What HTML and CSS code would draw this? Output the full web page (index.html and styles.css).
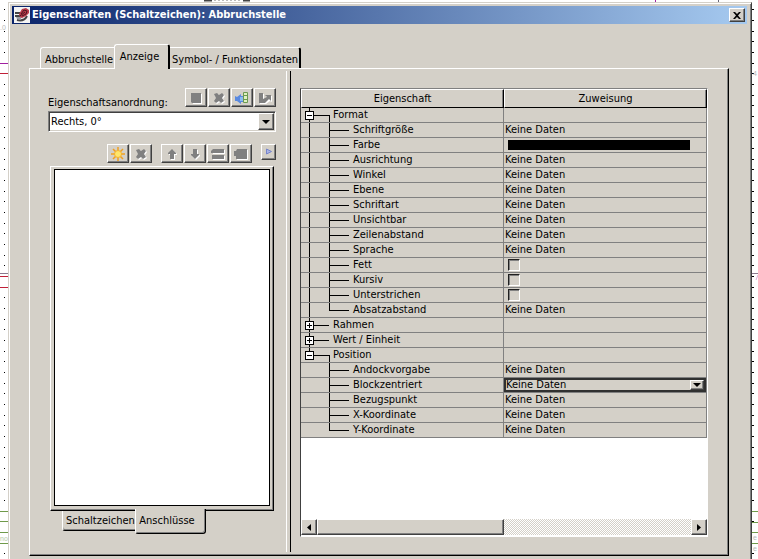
FILE: index.html
```html
<!DOCTYPE html>
<html lang="de">
<head>
<meta charset="utf-8">
<title>Eigenschaften (Schaltzeichen): Abbruchstelle</title>
<link rel="stylesheet" href="styles.css">
</head>
<body>
<svg class="drawing" width="758" height="559" viewBox="0 0 758 559" aria-hidden="true">
  <defs>
    <pattern id="dots" width="758" height="32" patternUnits="userSpaceOnUse">
      <path d="M4 9h1M4 20h1M4 31h1M752 9h2M752 20h2M752 31h2" stroke="#000" transform="translate(0 .5)"/>
    </pattern>
  </defs>
  <rect width="758" height="559" fill="url(#dots)"/>
  <path d="M0 63.5h8" stroke="#a020a0"/>
  <path d="M0 73.5h8M0 276.5h8M0 287.5h8" stroke="#c02038"/>
  <path d="M0 273.5h8M752 273.5h6" stroke="#8a7a8e"/>
  <path d="M0 511.5h8M0 521.5h8M0 532.5h8M0 543.5h8M752 511.5h6M752 522.5h6M752 532.5h6M752 543.5h6" stroke="#6f9a4a"/>
  <path d="M204 .5h8M243 .5h7" stroke="#444" stroke-width="2"/>
  <path d="M214 .5h28" stroke="#bbb" stroke-dasharray="2 2"/>
  <path d="M655.5 0v2" stroke="#a020a0"/><path d="M718.5 0v2" stroke="#667"/>
  <g font-family="Liberation Sans" font-size="7" fill="#b8b8b8"><text x="0" y="30">.0</text><text x="0" y="541" fill="#b4c8a4">no</text><text x="753" y="540">e</text><text x="753" y="551">e</text><text x="753" y="76">4</text></g>
  <path d="M756 280l2-5" stroke="#e0b0d8"/>
</svg>

<main class="dialog">
  <header class="titlebar">
    <svg class="logo" width="16" height="16" viewBox="0 0 16 16" aria-hidden="true">
      <path fill="#f4f4f4" d="M0 0h16v16H0z"/>
      <path fill="none" stroke="#444" stroke-width="2" d="M1 6h5M1 9h6M3 13c4 1 8 0 10-4"/>
      <path fill="#9a9aa2" d="M2 10h6l-2 3-3-1z"/>
      <path fill="#b83a48" d="M5 7l3-5 4-1 3 2v3l-3 3-4 2-2-1z"/>
      <path fill="none" stroke="#4a1820" d="M7 7l3-4 3 1-1 3-4 2M6 9l5-4"/>
    </svg>
    <h1>Eigenschaften (Schaltzeichen): Abbruchstelle</h1>
    <button class="btn close" type="button" aria-label="Schließen"><svg width="8" height="7" viewBox="0 0 8 7"><path d="M0 0h2l2 2 2-2h2L5 3.500 8 7H6L4 5 2 7H0l3-3.500z"/></svg></button>
  </header>

  <nav class="tabs" role="tablist">
    <button class="tab first" type="button" role="tab">Abbruchstelle</button>
    <button class="tab active" type="button" role="tab" aria-selected="true">Anzeige</button>
    <button class="tab last" type="button" role="tab">Symbol- / Funktionsdaten</button>
  </nav>

  <div class="page">
    <section class="left">
      <div class="row arrange">
        <label for="order">Eigenschaftsanordnung:</label>
        <div class="tools">
          <button class="btn tool" type="button" aria-label="Speichern"><svg viewBox="0 0 16 14"><path class="hi" d="M4 3h10v10H5z"/><path class="off" d="M3 2h10v10H4l-1-1z"/></svg></button>
          <button class="btn tool" type="button" aria-label="Löschen"><svg viewBox="0 0 16 14"><path class="hi" d="M4 4l3-1 2 2 3-2 2 2-2 3 2 3-3 2-2-2-3 2-2-2 2-3z"/><path class="off" d="M3 3l3-1 2 2 3-2 2 2-2 3 2 3-3 2-2-2-3 2-2-2 2-3z"/></svg></button>
          <button class="btn tool" type="button" aria-label="Übernehmen"><svg viewBox="0 0 16 14"><path fill="#5a8ae0" d="M1 5l2 1 4-3v2h2v6H7v2l-4-3H1z"/><path fill="#8dbcf0" d="M6 6h3v4H6z"/><path fill="#dff0c0" stroke="#6c9a50" d="M9.500 1.500h4v10h-4zM10 4.500h3M10 8.500h3"/></svg></button>
          <button class="btn tool" type="button" aria-label="Zuordnen"><svg viewBox="0 0 16 14"><path class="hi" d="M3 3h4v6l4-2-2-2h6v6l-2-1-4 3H3z"/><path class="off" d="M2 2h4v6l4-2-2-2h6v6l-2-2-4 4H2z"/></svg></button>
        </div>
      </div>
      <div class="combo">
        <select id="order"><option>Rechts, 0°</option></select>
        <span class="btn arrow" aria-hidden="true"></span>
      </div>
      <div class="row edit">
        <div class="tools">
          <button class="btn tool" type="button" aria-label="Neu"><svg viewBox="0 0 16 14"><path stroke="#f0a020" stroke-width="1.500" d="M8 0v14M1 7h14M3 2l10 10M13 2L3 12"/><circle cx="8" cy="7" r="3.500" fill="#ffe66a" stroke="#f4b030"/></svg></button>
          <button class="btn tool" type="button" aria-label="Entfernen"><svg viewBox="0 0 16 14"><path class="hi" d="M4 4l3-1 2 2 3-2 2 2-2 3 2 3-3 2-2-2-3 2-2-2 2-3z"/><path class="off" d="M3 3l3-1 2 2 3-2 2 2-2 3 2 3-3 2-2-2-3 2-2-2 2-3z"/></svg></button>
        </div>
        <div class="tools">
          <button class="btn tool" type="button" aria-label="Nach oben"><svg viewBox="0 0 16 14"><path class="hi" d="M9 3l4 4v1h-2v5H7V8H5V7z"/><path class="off" d="M8 2l4 4v1h-2v5H6V7H4V6z"/></svg></button>
          <button class="btn tool" type="button" aria-label="Nach unten"><svg viewBox="0 0 16 14"><path class="hi" d="M9 13l4-4V8h-2V3H7v5H5v1z"/><path class="off" d="M8 12l4-4V7h-2V2H6v5H4v1z"/></svg></button>
          <button class="btn tool" type="button" aria-label="Andocken"><svg viewBox="0 0 16 14"><path class="hi" d="M3 3h12v4H3zM3 9h12v4H3z"/><path class="off" d="M3 2h11v4H1V4zM2 8h12v4H2z"/></svg></button>
          <button class="btn tool" type="button" aria-label="Abdocken"><svg viewBox="0 0 16 14"><path class="hi" d="M4 3h11v10H4z"/><path class="off" d="M4 2h10v10H3V9H1V4h2z"/></svg></button>
        </div>
        <button class="btn more" type="button" aria-label="Mehr"><svg width="8" height="8" viewBox="0 0 8 8"><path fill="#a9b4e6" stroke="#7684cc" d="M1.500 1v5l5-2.500z"/></svg></button>
      </div>
      <div class="listframe"><div class="list"></div></div>
      <div class="subtabs" role="tablist">
        <button class="subtab" type="button" role="tab">Schaltzeichen</button>
        <button class="subtab active" type="button" role="tab" aria-selected="true">Anschlüsse</button>
      </div>
    </section>

    <section class="right">
      <div class="grid">
        <table>
          <thead><tr><th scope="col">Eigenschaft</th><th scope="col">Zuweisung</th></tr></thead>
          <tbody>
            <tr><th scope="row" class="group open"><button class="toggle" type="button" aria-label="Format zuklappen"></button>Format</th><td></td></tr>
            <tr><th scope="row" class="leaf trunk">Schriftgröße</th><td>Keine Daten</td></tr>
            <tr><th scope="row" class="leaf trunk">Farbe</th><td><div class="swatch"></div></td></tr>
            <tr><th scope="row" class="leaf trunk">Ausrichtung</th><td>Keine Daten</td></tr>
            <tr><th scope="row" class="leaf trunk">Winkel</th><td>Keine Daten</td></tr>
            <tr><th scope="row" class="leaf trunk">Ebene</th><td>Keine Daten</td></tr>
            <tr><th scope="row" class="leaf trunk">Schriftart</th><td>Keine Daten</td></tr>
            <tr><th scope="row" class="leaf trunk">Unsichtbar</th><td>Keine Daten</td></tr>
            <tr><th scope="row" class="leaf trunk">Zeilenabstand</th><td>Keine Daten</td></tr>
            <tr><th scope="row" class="leaf trunk">Sprache</th><td>Keine Daten</td></tr>
            <tr><th scope="row" class="leaf trunk"><label for="fett">Fett</label></th><td><input type="checkbox" id="fett"></td></tr>
            <tr><th scope="row" class="leaf trunk"><label for="kursiv">Kursiv</label></th><td><input type="checkbox" id="kursiv"></td></tr>
            <tr><th scope="row" class="leaf trunk"><label for="unter">Unterstrichen</label></th><td><input type="checkbox" id="unter"></td></tr>
            <tr><th scope="row" class="leaf trunk end">Absatzabstand</th><td>Keine Daten</td></tr>
            <tr><th scope="row" class="group"><button class="toggle plus" type="button" aria-label="Rahmen aufklappen"></button>Rahmen</th><td></td></tr>
            <tr><th scope="row" class="group"><button class="toggle plus" type="button" aria-label="Wert / Einheit aufklappen"></button>Wert / Einheit</th><td></td></tr>
            <tr><th scope="row" class="group open final"><button class="toggle" type="button" aria-label="Position zuklappen"></button>Position</th><td></td></tr>
            <tr><th scope="row" class="leaf">Andockvorgabe</th><td>Keine Daten</td></tr>
            <tr><th scope="row" class="leaf"><label for="block">Blockzentriert</label></th><td class="editing"><div class="cellcombo"><select id="block"><option>Keine Daten</option></select><span class="btn arrow" aria-hidden="true"></span></div></td></tr>
            <tr><th scope="row" class="leaf">Bezugspunkt</th><td>Keine Daten</td></tr>
            <tr><th scope="row" class="leaf">X-Koordinate</th><td>Keine Daten</td></tr>
            <tr><th scope="row" class="leaf end">Y-Koordinate</th><td>Keine Daten</td></tr>
          </tbody>
        </table>
        <div class="scrollbar">
          <button class="btn step" type="button" aria-label="Nach links"><svg width="4" height="7" viewBox="0 0 4 7"><path d="M4 0v7L0 3.500z"/></svg></button>
          <div class="btn thumb"></div>
          <div class="track"></div>
          <button class="btn step" type="button" aria-label="Nach rechts"><svg width="4" height="7" viewBox="0 0 4 7"><path d="M0 0v7l4-3.500z"/></svg></button>
        </div>
      </div>
    </section>
  </div>
</main>
</body>
</html>
```
FILE: styles.css
```css
* { box-sizing: border-box; }

:root {
  --face: #d4d0c8;
  --shadow: #808080;
  --dark: #202020;
}

body {
  margin: 0;
  padding: 2px 6px 0 8px;
  background: #fff;
  color: #000;
  font: 11px/14px Tahoma, "DejaVu Sans Condensed", "DejaVu Sans", sans-serif;
  overflow: hidden;
}

button, select, input { font: inherit; color: inherit; margin: 0; }
svg { display: block; }

.drawing { position: absolute; left: 0; top: 0; z-index: -1; }

.dialog {
  display: flex;
  flex-direction: column;
  height: calc(100vh - 2px);
  min-height: 500px;
  padding: 3px 4px 3px 3px;
  background: var(--face);
  border: 1px solid var(--face);
  border-right-color: #404040;
  border-bottom: 0;
  box-shadow: inset 1px 1px #fff, inset -1px 0 var(--shadow);
}

.titlebar {
  display: flex;
  align-items: center;
  height: 18px;
  padding: 0 2px;
  gap: 2px;
  background: linear-gradient(90deg, #0a246a, #a6caf0);
}
.titlebar h1 {
  flex: 1;
  margin: 0;
  color: #fff;
  font-size: 11px;
  font-weight: bold;
  white-space: nowrap;
}

.btn {
  display: flex;
  align-items: center;
  justify-content: center;
  padding: 0;
  background: var(--face);
  border: 1px solid;
  border-color: #fff #404040 #404040 #fff;
  box-shadow: inset -1px -1px var(--shadow);
}
.close { width: 16px; height: 14px; }

.tabs {
  display: flex;
  align-items: flex-end;
  margin-top: 20px;
  padding-left: 28px;
}
.tab {
  height: 21px;
  padding: 3px 3px 0;
  background: var(--face);
  border: 1px solid #fff;
  border-width: 1px 0 0 1px;
  border-radius: 3px 0 0 0;
  white-space: nowrap;
}
.tab.first { width: 74px; padding: 3px 0 0 4px; text-align: left; }
.tab.active {
  position: relative;
  width: 56px;
  height: 25px;
  margin-bottom: -1px;
  padding: 0 8px 0 4px;
  border-right: 2px solid #000;
  border-radius: 3px 3px 0 0;
}
.tab.last { width: 131px; padding: 3px 2px 0; border-left: 0; border-right: 2px solid #000; border-radius: 0 3px 0 0; }

.page {
  flex: 1;
  display: flex;
  min-height: 0;
  margin: 0 18px 0 17px;
  padding: 2px 0 3px;
  border: 1px solid;
  border-color: #fff #000 #000 #fff;
  box-shadow: inset -1px -1px var(--shadow);
}

.left {
  display: flex;
  flex-direction: column;
  width: 257px;
  padding: 17px 10px 19px 18px;
  border-right: 1px solid #fff;
}
.row { display: flex; align-items: center; }
.arrange { justify-content: space-between; height: 19px; }
.arrange label { padding-top: 10px; white-space: nowrap; }
.tools { display: flex; gap: 1px; }
.tool { width: 22px; height: 19px; }
.tool svg { width: 16px; height: 14px; }
.off { fill: #808080; }
.hi { fill: #fff; }

.combo {
  display: flex;
  height: 21px;
  margin-top: 4px;
  padding: 1px;
  background: #fff;
  border: 1px solid;
  border-color: var(--shadow) #fff #fff var(--shadow);
  box-shadow: inset 1px 1px #404040, inset -1px -1px var(--face);
}
select {
  flex: 1;
  min-width: 0;
  padding: 0 1px;
  appearance: none;
  background: transparent;
  border: 0;
  border-radius: 0;
  outline: 0;
}
.arrow { width: 16px; pointer-events: none; }
.arrow::before { content: ""; border: 4px solid transparent; border-top-color: #000; border-bottom: 0; }

.edit { gap: 9px; margin-top: 12px; justify-content: flex-end; align-items: flex-start; }
.more { width: 15px; height: 16px; }

.listframe {
  flex: 1;
  display: flex;
  margin: 3px 2px 0;
  padding: 2px 3px 4px;
  border: 1px solid;
  border-color: #fff #000 #000 #fff;
  box-shadow: inset -1px -1px var(--shadow);
}
.list { flex: 1; background: #fff; border: 1px solid #000; }

.subtabs { display: flex; align-items: flex-start; height: 22px; padding-left: 14px; }
.subtab {
  width: 73px;
  height: 20px;
  padding: 0 3px;
  background: var(--face);
  border: 1px solid;
  border-color: transparent #000 #000 #fff;
  border-width: 0 0 1px 1px;
  border-radius: 0 0 0 3px;
  box-shadow: inset 0 -1px var(--shadow);
  white-space: nowrap;
}
.subtab.active {
  position: relative;
  width: 71px;
  height: 25px;
  margin-top: -2px;
  padding-right: 10px;
  border-width: 0 1px 1px 1px;
  border-radius: 0 0 3px 3px;
  box-shadow: inset -1px -1px var(--shadow);
}

.right {
  flex: 1;
  display: flex;
  min-width: 0;
  margin-left: 3px;
  padding: 17px 20px 15px 9px;
  border-left: 1px solid #000;
}
.grid {
  flex: 1;
  display: flex;
  flex-direction: column;
  justify-content: space-between;
  min-width: 0;
  padding-bottom: 1px;
  background: #fff;
  border: 1px solid;
  border-color: var(--shadow) #fff #fff #404040;
}
table {
  width: 100%;
  table-layout: fixed;
  border-collapse: separate;
  border-spacing: 0;
  background: var(--face);
}
th, td {
  height: 15px;
  padding: 0 1px;
  border: 0 solid var(--shadow);
  border-width: 0 1px 1px 0;
  font-weight: normal;
  line-height: 14px;
  text-align: left;
  white-space: nowrap;
}
thead th {
  height: 19px;
  border: 1px solid;
  border-color: #fff #000 #000 #fff;
  box-shadow: inset -1px 0 var(--shadow);
  text-align: center;
}

/* Tree guides: trunk at 8px, child branch at 28px */
tbody th { background-repeat: no-repeat; }
.leaf {
  padding-left: 52px;
  background-image: linear-gradient(#000, #000), linear-gradient(#000, #000);
  background-position: 28px 0, 28px 7px;
  background-size: 1px 100%, 20px 1px;
}
.leaf.end { background-size: 1px 7px, 20px 1px; }
.leaf.trunk {
  background-image: linear-gradient(#000, #000), linear-gradient(#000, #000), linear-gradient(#000, #000);
  background-position: 28px 0, 28px 7px, 8px 0;
  background-size: 1px 100%, 20px 1px, 1px 100%;
}
.leaf.trunk.end { background-size: 1px 7px, 20px 1px, 1px 100%; }
.group {
  padding-left: 4px;
  background-image: linear-gradient(#000, #000), linear-gradient(#000, #000);
  background-position: 8px 0, 8px 7px;
  background-size: 1px 100%, 20px 1px;
}
.group.open {
  background-image: linear-gradient(#000, #000), linear-gradient(#000, #000), linear-gradient(#000, #000);
  background-position: 8px 0, 8px 7px, 28px 7px;
  background-size: 1px 100%, 20px 1px, 1px 8px;
}
.group.final { background-size: 1px 7px, 20px 1px, 1px 8px; }
.toggle {
  float: left;
  width: 9px;
  height: 9px;
  margin: 3px 19px 0 0;
  padding: 0;
  border: 1px solid #000;
  background: linear-gradient(#000, #000) center / 5px 1px no-repeat #fff;
}
.toggle.plus {
  background:
    linear-gradient(#000, #000) center / 5px 1px no-repeat,
    linear-gradient(#000, #000) center / 1px 5px no-repeat #fff;
}

.swatch { height: 10px; margin: 0 15px 0 3px; background: #000; }
input[type="checkbox"] {
  display: block;
  width: 12px;
  height: 12px;
  margin-left: 3px;
  appearance: none;
  background: var(--face);
  border: 1px solid;
  border-color: var(--dark) #fff #fff var(--dark);
  box-shadow: inset 1px 1px var(--shadow);
}
td.editing { padding: 0; }
.cellcombo { display: flex; height: 14px; border: 2px solid #303030; }
.cellcombo select { padding: 0; line-height: 10px; }
.cellcombo .arrow { width: 14px; }

.scrollbar { display: flex; height: 16px; }
.step { width: 16px; }
.thumb { width: 46%; }
.track {
  flex: 1;
  background: repeating-conic-gradient(#fff 0 25%, var(--face) 0 50%) 0 0 / 2px 2px;
}
```
